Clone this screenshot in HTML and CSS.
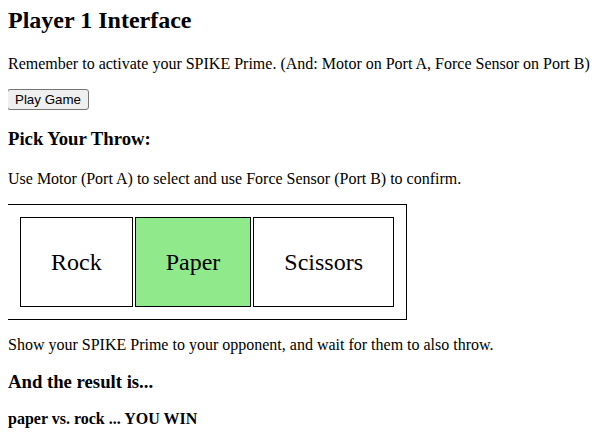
FILE: index.html
```html
<!DOCTYPE html>
<html>
<head>
<meta charset="utf-8">
<link rel="stylesheet" href="styles.css">
</head>
<body>
<h2 class="title">Player 1 Interface</h2>
<p class="intro">Remember to activate your SPIKE Prime. (And: Motor on Port A, Force Sensor on Port B)</p>
<div class="actions"><button class="play">Play Game</button></div>
<h3 class="pick">Pick Your Throw:</h3>
<p class="hint">Use Motor (Port A) to select and use Force Sensor (Port B) to confirm.</p>
<div class="box">
  <table class="throws">
    <tr>
      <td>Rock</td>
      <td class="selected">Paper</td>
      <td>Scissors</td>
    </tr>
  </table>
</div>
<p class="show">Show your SPIKE Prime to your opponent, and wait for them to also throw.</p>
<h3 class="result-label">And the result is...</h3>
<h4 class="result">paper vs. rock ... YOU WIN</h4>
</body>
</html>
```
FILE: styles.css
```css
html, body {
  font-family: "Liberation Serif", "Times New Roman", serif;
  color: #000;
  background: #fff;
}
body {
  margin: 8px;
}
.title {
  font-size: 24px;
  line-height: 28px;
  margin: -2px 0 21px;
}
.intro {
  font-size: 16px;
  line-height: 18px;
  margin: 0;
}
.actions {
  display: flex;
  margin-top: 16px;
}
.play {
  font-family: "Liberation Sans", Arial, sans-serif;
  font-size: 13.33px;
  line-height: 15px;
  padding: 2px 7px;
  margin-left: -1px;
  border: 1px solid #767676;
  border-radius: 3px;
  background: #efefef;
  color: #000;
}
.pick {
  font-size: 18.72px;
  line-height: 22px;
  margin: 18px 0 20px;
}
.hint {
  line-height: 18px;
  margin: 0 0 16px;
}
.box {
  width: fit-content;
  border: 1px solid #000;
  padding: 10px;
  margin-left: -1px;
}
.throws {
  border-spacing: 2px;
}
.throws td {
  border: 1px solid #000;
  padding: 31px 30px;
  font-size: 24px;
  line-height: 26px;
}
.throws td.selected {
  background: #90e98b;
}
.show {
  line-height: 18px;
  margin: 16px 0 0;
}
.result-label {
  font-size: 18.72px;
  line-height: 22px;
  margin: 17px 0 0;
}
.result {
  font-size: 16px;
  line-height: 18px;
  margin: 17px 0 0;
}
```
